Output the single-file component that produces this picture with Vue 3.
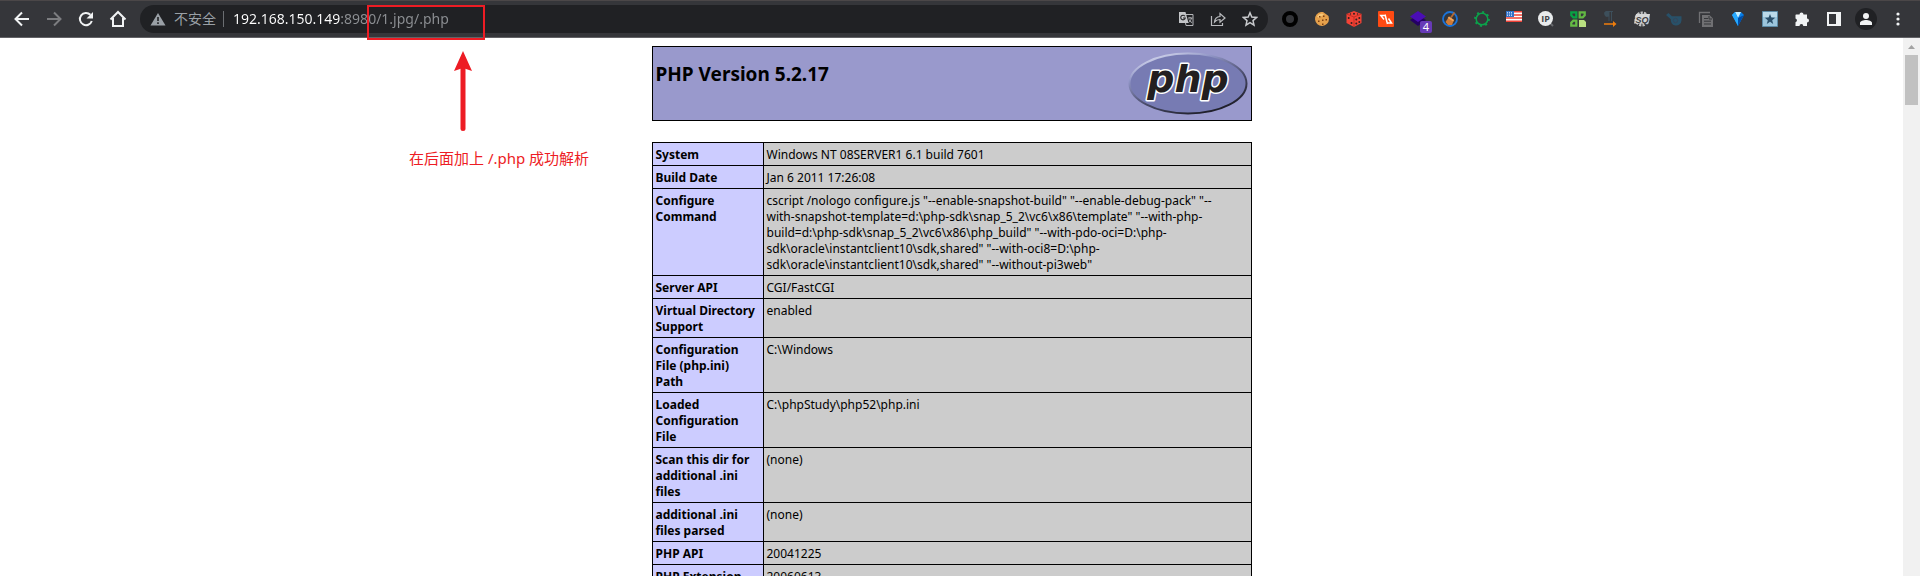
<script setup>
import { ref } from 'vue'

const address = ref('192.168.150.149:8980/1.jpg/.php')

const rows = [
  ['System', 'Windows NT 08SERVER1 6.1 build 7601'],
  ['Build Date', 'Jan 6 2011 17:26:08'],
  [
    'Configure Command',
    'cscript /nologo configure.js "--enable-snapshot-build" "--enable-debug-pack" "--\nwith-snapshot-template=d:\\php-sdk\\snap_5_2\\vc6\\x86\\template" "--with-php-\nbuild=d:\\php-sdk\\snap_5_2\\vc6\\x86\\php_build" "--with-pdo-oci=D:\\php-\nsdk\\oracle\\instantclient10\\sdk,shared" "--with-oci8=D:\\php-\nsdk\\oracle\\instantclient10\\sdk,shared" "--without-pi3web"'
  ],
  ['Server API', 'CGI/FastCGI'],
  ['Virtual Directory Support', 'enabled'],
  ['Configuration File (php.ini) Path', 'C:\\Windows'],
  ['Loaded Configuration File', 'C:\\phpStudy\\php52\\php.ini'],
  ['Scan this dir for additional .ini files', '(none)'],
  ['additional .ini files parsed', '(none)'],
  ['PHP API', '20041225'],
  ['PHP Extension', '20060613']
]
</script>

<template>
  <div class="browser">
    <header class="toolbar">
      <nav class="group" aria-label="Navigation">
        <button class="tool" aria-label="Back">
          <svg width="16" height="16" viewBox="0 0 16 16"><path d="M15 8H2M8 1.5 1.5 8 8 14.5" fill="none" stroke="#f1f3f4" stroke-width="2" /></svg>
        </button>
        <button class="tool" aria-label="Forward" disabled>
          <svg width="16" height="16" viewBox="0 0 16 16"><path d="M1 8h13M8 1.5 14.5 8 8 14.5" fill="none" stroke="#7c7d80" stroke-width="2" /></svg>
        </button>
        <button class="tool" aria-label="Reload">
          <svg width="16" height="16" viewBox="0 0 16 16"><path d="M13.8 10A6.1 6.1 0 1 1 12.4 3.8" fill="none" stroke="#f1f3f4" stroke-width="2" /><path d="M15 1v6.5H8.500z" fill="#f1f3f4" /></svg>
        </button>
        <button class="tool" aria-label="Home">
          <svg width="18" height="18" viewBox="0 0 18 18"><path d="M1.500 9.500 9 2l7.500 7.500M4 8v8h10V8" fill="none" stroke="#f1f3f4" stroke-width="2" /></svg>
        </button>
      </nav>

      <div class="omnibox">
        <svg class="warn" width="16" height="16" viewBox="0 0 16 16"><path d="M8 2 15.500 14.500H.500z" fill="#9aa0a6" /><path d="M8 6v4M8 11.300v1.700" stroke="#202124" stroke-width="1.600" /></svg>
        <label class="security" for="address">不安全</label>
        <input id="address" v-model="address" class="address" type="text" spellcheck="false" />
        <button class="tool" aria-label="Translate">
          <svg width="16" height="16" viewBox="0 0 16 16">
            <path d="M6 3.500h9v11H8z" fill="none" stroke="#b4b6b9" stroke-width="1" />
            <path d="M1 1h6.500l3 11H1z" fill="#c4c6c9" />
            <path d="M7 5.300A2.300 2.300 0 1 0 7.300 7H5" fill="none" stroke="#202124" stroke-width="1.100" />
            <path d="M10 7h4.500M12 6v1M13.500 7c-.5 2-1.500 3.500-3 4.500M11 8.500c.6 1.500 1.600 2.500 3 3" fill="none" stroke="#b4b6b9" stroke-width="1" />
          </svg>
        </button>
        <button class="tool" aria-label="Share">
          <svg width="16" height="16" viewBox="0 0 16 16"><path d="M1.500 5v9.500h11V12M4.500 11c.3-3.500 2.200-5.300 5.500-5.500V2.500L15 7l-5 4.300V8.500c-2.500 0-4 .7-5.500 2.500z" fill="none" stroke="#b9bbbe" stroke-width="1.200" /></svg>
        </button>
        <button class="tool" aria-label="Bookmark this page">
          <svg width="16" height="16" viewBox="0 0 16 16"><path d="m8 1.800 1.800 4.300 4.700.4-3.500 3.100 1 4.500L8 11.700l-4 2.400 1-4.500L1.500 6.500l4.700-.4z" fill="none" stroke="#c8cacd" stroke-width="1.500" /></svg>
        </button>
      </div>

      <div class="group">
        <button class="tool" aria-label="Ring">
          <svg width="16" height="16" viewBox="0 0 16 16"><circle cx="8" cy="8" r="6" fill="none" stroke="#000" stroke-width="4" /></svg>
        </button>
        <button class="tool" aria-label="Cookies">
          <svg width="16" height="16" viewBox="0 0 16 16"><path d="M7 1a7 7 0 1 0 8 7l-.5-3-2-1.500L9 1z" fill="#e5a04b" /><path d="M3 5.500A6 6 0 0 1 8 2.500l2 1L5 7z" fill="#f6c77b" /><path d="M5 5h1.500v1.500H5zM9 4.500h1.500V6H9zM8 8.500h1.500V10H8zM4 9.500h1.500V11H4zM11.500 8H13v1.500h-1.500zM8 12.500h1.500V14H8z" fill="#7a3f12" /></svg>
        </button>
        <button class="tool" aria-label="Dice">
          <svg width="16" height="16" viewBox="0 0 16 16"><path d="m8 0 7.500 3v9L8 16 .500 12V3z" fill="#f44336" /><path d="M.500 3 8 6l7.500-3M8 6v10" fill="none" stroke="#b9281f" stroke-width=".8" /><g fill="#35201f"><circle cx="8" cy="2.800" r="1" /><circle cx="4.500" cy="3" r=".7" /><circle cx="11.500" cy="3" r=".7" /><circle cx="2.700" cy="7" r="1" /><circle cx="5.500" cy="12" r="1" /><circle cx="10.300" cy="8.500" r="1" /><circle cx="13.300" cy="7" r="1" /><circle cx="10.300" cy="12.500" r="1" /><circle cx="13.300" cy="11" r="1" /></g></svg>
        </button>
        <button class="tool" aria-label="Code">
          <svg width="16" height="16" viewBox="0 0 16 16"><rect width="16" height="16" rx="1" fill="#ff4a12" /><path d="M6.500 4.500H2.800L6 8.500M7 3.500 9.500 13M10.500 7.500l3 4.500H10" fill="none" stroke="#fff" stroke-width="1.500" /></svg>
        </button>
        <button class="tool" aria-label="Layers, 4 items">
          <svg width="16" height="16" viewBox="0 0 16 16"><path d="m8 4 8 5-8 6-8-6z" fill="#240064" /><path d="m8 0 8 5.500L8 11 0 5.500z" fill="#4a0db5" /></svg>
          <span class="badge">4</span>
        </button>
        <button class="tool" aria-label="Clean">
          <svg width="16" height="16" viewBox="0 0 16 16"><circle cx="8" cy="8" r="7" fill="none" stroke="#1a73d9" stroke-width="1.800" /><path d="m12.500 1.500-3.500 5" stroke="#b46a33" stroke-width="1.800" /><path d="m7 5.500 5 3.500-2 5H6l-2.500-3z" fill="#d07a35" /><path d="m7 5.500 5 3.500-.8 1.500-5.500-3.500z" fill="#f2a65a" /></svg>
        </button>
        <button class="tool" aria-label="Gear">
          <svg width="16" height="16" viewBox="0 0 16 16"><circle cx="8" cy="8" r="5.800" fill="none" stroke="#0ba34b" stroke-width="1.500" /><circle cx="8" cy="8" r="7" fill="none" stroke="#0ba34b" stroke-width="1.800" stroke-dasharray="2 3.500" /></svg>
        </button>
        <button class="tool flag" aria-label="United States">
          <svg width="16" height="11" viewBox="0 0 16 11"><path d="M0 0h16v11H0z" fill="#fff" /><path d="M0 .8h16M0 4h16M0 7h16M0 10.200h16" stroke="#ee4136" stroke-width="1.500" /><path d="M0 0h8v6H0z" fill="#3272c8" /><path d="M1 1.500h6M1 3h6M1 4.500h6" stroke="#e1edff" stroke-width=".8" stroke-dasharray="1 1" /></svg>
        </button>
        <button class="tool" aria-label="IP lookup">
          <svg width="16" height="16" viewBox="0 0 16 16"><path d="m11 11 4 4" stroke="#686a6e" stroke-width="2" /><circle cx="7.500" cy="7.500" r="7.500" fill="#e9ebec" /><text x="7.500" y="11" class="ip" text-anchor="middle">IP</text></svg>
        </button>
        <button class="tool" aria-label="QR code">
          <svg width="16" height="16" viewBox="0 0 16 16"><path d="M1.300 1.300h5v5h-3l-2-2z" fill="none" stroke="#08a344" stroke-width="2.300" /><path d="M9.700 1.300h5v3l-2 2h-3z" fill="none" stroke="#62b843" stroke-width="2.300" /><path d="M3.300 9.700h3v5h-5v-3z" fill="none" stroke="#65bb45" stroke-width="2.300" /><path d="M9 9h5l2 2v5H9z" fill="#b9e080" /></svg>
        </button>
        <button class="tool" aria-label="Paragraph direction">
          <svg width="16" height="16" viewBox="0 0 16 16"><path d="M4 0h7v1h-1v9H9V1H7.500v9h-1V5.500A2.700 2.700 0 0 1 4 0z" fill="#3d4f5b" /><path d="M2 12.300h9V10l3.500 3L11 16v-2.300H2z" fill="#ef7d0c" /></svg>
        </button>
        <button class="tool" aria-label="SQ">
          <svg width="16" height="16" viewBox="0 0 16 16"><circle cx="8" cy="8" r="5.500" fill="none" stroke="#bfc0c1" stroke-width="4" stroke-dasharray="2 1" /><path d="M2 3h14l-1.500 9.500H0z" fill="#d5d6d7" /><text x="8" y="11.500" class="sq" text-anchor="middle">SQ</text></svg>
        </button>
        <button class="tool" aria-label="Whistle">
          <svg width="16" height="16" viewBox="0 0 16 16"><path d="m0 4 2.500-2L6 5.200h9.500V9.500a5.400 5.400 0 1 1-10.700-1.300z" fill="#285169" /><circle cx="9.500" cy="9.500" r="2.200" fill="none" stroke="#35465a" stroke-width="1" /></svg>
        </button>
        <button class="tool" aria-label="Copy">
          <svg width="16" height="16" viewBox="0 0 16 16"><path d="M1.500 12V1.500H12" fill="none" stroke="#707073" stroke-width="1.300" /><path d="M4 4h7.500L15 7.500V16H4z" fill="#707073" /><path d="M6 7.500h4M6 10.200h7M6 13h7M11 5v3h3" fill="none" stroke="#35363a" /></svg>
        </button>
        <button class="tool" aria-label="Gem">
          <svg width="16" height="16" viewBox="0 0 16 16"><path d="m2 4 3-3h6l3 3-6 11z" fill="#087fe8" /><path d="M5 1h6L8 7z" fill="#c3edff" /><path d="m2 4 3-3 3 6v8z" fill="#26a9ff" /><path d="M14 4 8 7v8z" fill="#004da8" /></svg>
        </button>
        <button class="tool" aria-label="Favourites">
          <svg width="16" height="16" viewBox="0 0 16 16"><path d="M.500.500h15v15H.500z" fill="#9cc5dc" stroke="#5d8ca8" /><path d="M1 1h14v5H1z" fill="#bbdaea" /><path d="m8 3 1.400 3.600 3.800.2-3 2.400 1 3.700L8 10.800l-3.200 2.100 1-3.700-3-2.400 3.800-.2z" fill="#2b506b" /></svg>
        </button>
        <button class="tool" aria-label="Extensions">
          <svg width="16" height="16" viewBox="0 0 16 16"><path d="M2 3.500h3.500a2 2 0 1 1 4 0H13V7.500a2 2 0 1 1 0 4V15H9.300a1.900 1.900 0 0 0-3.800 0H1.500v-3.800a1.900 1.900 0 0 0 0-3.700V4z" fill="#f1f3f4" /></svg>
        </button>
        <button class="tool" aria-label="Side panel">
          <svg width="14" height="14" viewBox="0 0 14 14"><path d="M1 1h12v12H1z" fill="none" stroke="#f1f3f4" stroke-width="2" /><path d="M9 1h4v12H9z" fill="#f1f3f4" /></svg>
        </button>
        <button class="tool" aria-label="Profile">
          <svg width="22" height="22" viewBox="0 0 22 22"><circle cx="11" cy="11" r="11" fill="#202124" /><circle cx="11" cy="8" r="3" fill="#f1f3f4" /><path d="M5 17v-2c0-2 3.500-3 6-3s6 1 6 3v2z" fill="#f1f3f4" /></svg>
        </button>
        <button class="tool" aria-label="Menu">
          <svg width="4" height="14" viewBox="0 0 4 14"><g fill="#f1f3f4"><circle cx="2" cy="2" r="1.600" /><circle cx="2" cy="7" r="1.600" /><circle cx="2" cy="12" r="1.600" /></g></svg>
        </button>
      </div>
    </header>

    <div class="viewport">
      <main class="page">
        <div class="banner">
          <h1>PHP Version 5.2.17</h1>
          <svg class="logo" width="120" height="67" viewBox="0 0 120 67" role="img" aria-label="PHP">
            <defs>
              <linearGradient id="rim" x1="0.2" y1="0" x2="0.8" y2="1">
                <stop offset="0" stop-color="#d9dcf0" />
                <stop offset="0.25" stop-color="#8f94c5" />
                <stop offset="0.6" stop-color="#484a68" />
                <stop offset="1" stop-color="#17161d" />
              </linearGradient>
            </defs>
            <ellipse cx="60" cy="33.500" rx="58.500" ry="30" fill="#777bb3" stroke="url(#rim)" stroke-width="2" />
            <g class="wordmark" text-anchor="middle">
              <text x="60" y="42" class="halo" aria-hidden="true">php</text>
              <text x="60" y="42" class="ink">php</text>
            </g>
          </svg>
        </div>
        <table class="info">
          <colgroup>
            <col class="key" />
            <col />
          </colgroup>
          <tbody>
            <tr v-for="[name, value] in rows" :key="name">
              <th scope="row">{{ name }}</th>
              <td>{{ value }}</td>
            </tr>
          </tbody>
        </table>
      </main>
      <div class="scrollbar">
        <svg width="17" height="17" viewBox="0 0 17 17"><path d="m5 11 3.500-4 3.500 4z" fill="#a3a3a3" /></svg>
        <div class="thumb"></div>
      </div>
    </div>

    <div class="mark"></div>
    <svg class="arrow" width="18" height="82" viewBox="0 0 18 82"><path d="M9 16v61.500" stroke="#ed1c24" stroke-width="5" stroke-linecap="round" /><path d="M9 0l9 20-9-3-9 3z" fill="#ed1c24" /></svg>
    <p class="note">在后面加上 /.php 成功解析</p>
  </div>
</template>

<style>
body {
  margin: 0;
}
</style>

<style scoped>
.browser {
  position: relative;
  display: flex;
  flex-direction: column;
  height: 100vh;
  overflow: hidden;
  background: #fff;
  color: #000;
  font-family: "Noto Sans", "Noto Sans CJK SC", sans-serif;
}
.toolbar {
  display: flex;
  align-items: center;
  gap: 6px;
  box-sizing: border-box;
  height: 38px;
  padding: 0 6px;
  background: #35363a;
  border-top: 1px solid #4b4748;
  border-bottom: 1px solid #626266;
}
.group {
  display: flex;
}
.tool {
  position: relative;
  display: flex;
  align-items: center;
  justify-content: center;
  width: 32px;
  height: 28px;
  padding: 0;
  border: 0;
  background: none;
}
.flag {
  align-items: flex-start;
  padding-top: 6px;
}
.badge {
  position: absolute;
  left: 18px;
  top: 16px;
  width: 12px;
  border-radius: 2px;
  background: #673ab7;
  color: #fff;
  font: 11px/12px "Noto Sans", sans-serif;
  text-align: center;
}
.ip {
  font: bold 9px "Open Sans", sans-serif;
  fill: #404246;
}
.sq {
  font: italic bold 9px "Liberation Sans", sans-serif;
  fill: #3d3e42;
}
.omnibox {
  display: flex;
  flex: 1;
  align-items: center;
  height: 28px;
  padding: 0 2px 0 10px;
  border-radius: 14px;
  background: #202124;
}
.security {
  margin-left: 8px;
  padding-right: 7px;
  border-right: 1px solid #6b6e72;
  color: #9aa0a6;
  font-size: 14px;
  line-height: 16px;
}
.address {
  flex: 1;
  min-width: 0;
  margin-left: 9px;
  padding: 0;
  border: 0;
  outline: 0;
  background: linear-gradient(90deg, #fff 108px, #8d9094 108px);
  background-clip: text;
  -webkit-background-clip: text;
  -webkit-text-fill-color: transparent;
  color: #fff;
  font: 14px/20px "Noto Sans", sans-serif;
}
.viewport {
  display: flex;
  flex: 1;
  min-height: 0;
}
.page {
  flex: 1;
  padding-top: 8px;
  overflow: hidden;
}
.banner {
  display: flex;
  justify-content: space-between;
  box-sizing: border-box;
  max-width: 600px;
  margin: 0 auto 21px;
  padding: 3px;
  border: 1px solid #000;
  background: #9999cc;
}
h1 {
  margin: 12px 0 0;
  font-size: 19px;
  line-height: 24px;
}
.wordmark {
  font: italic bold 38px "DejaVu Sans", sans-serif;
  stroke-linejoin: round;
}
.halo {
  fill: #fff;
  stroke: #fff;
  stroke-width: 3px;
}
.ink {
  fill: #231f20;
}
.info {
  width: 100%;
  max-width: 600px;
  margin: 0 auto;
  border-collapse: collapse;
  table-layout: fixed;
  font-size: 12px;
  line-height: 16px;
}
.key {
  width: 111px;
}
th,
td {
  padding: 4px 3px 2px;
  border: 1px solid #000;
  text-align: left;
  vertical-align: top;
}
th {
  background: #ccccff;
}
td {
  background: #cccccc;
  white-space: pre-line;
}
.scrollbar {
  width: 17px;
  background: #f1f1f1;
}
.scrollbar svg {
  display: block;
}
.thumb {
  height: 50px;
  margin: 0 2px;
  background: #c1c1c1;
}
.mark {
  position: absolute;
  left: 367px;
  top: 5px;
  box-sizing: border-box;
  width: 118px;
  height: 35px;
  border: 2px solid #ed1c24;
}
.arrow {
  position: absolute;
  left: 454px;
  top: 51px;
}
.note {
  position: absolute;
  left: 409px;
  top: 147px;
  margin: 0;
  color: #ed1c24;
  font-size: 15px;
  line-height: 22px;
  white-space: nowrap;
}
</style>
